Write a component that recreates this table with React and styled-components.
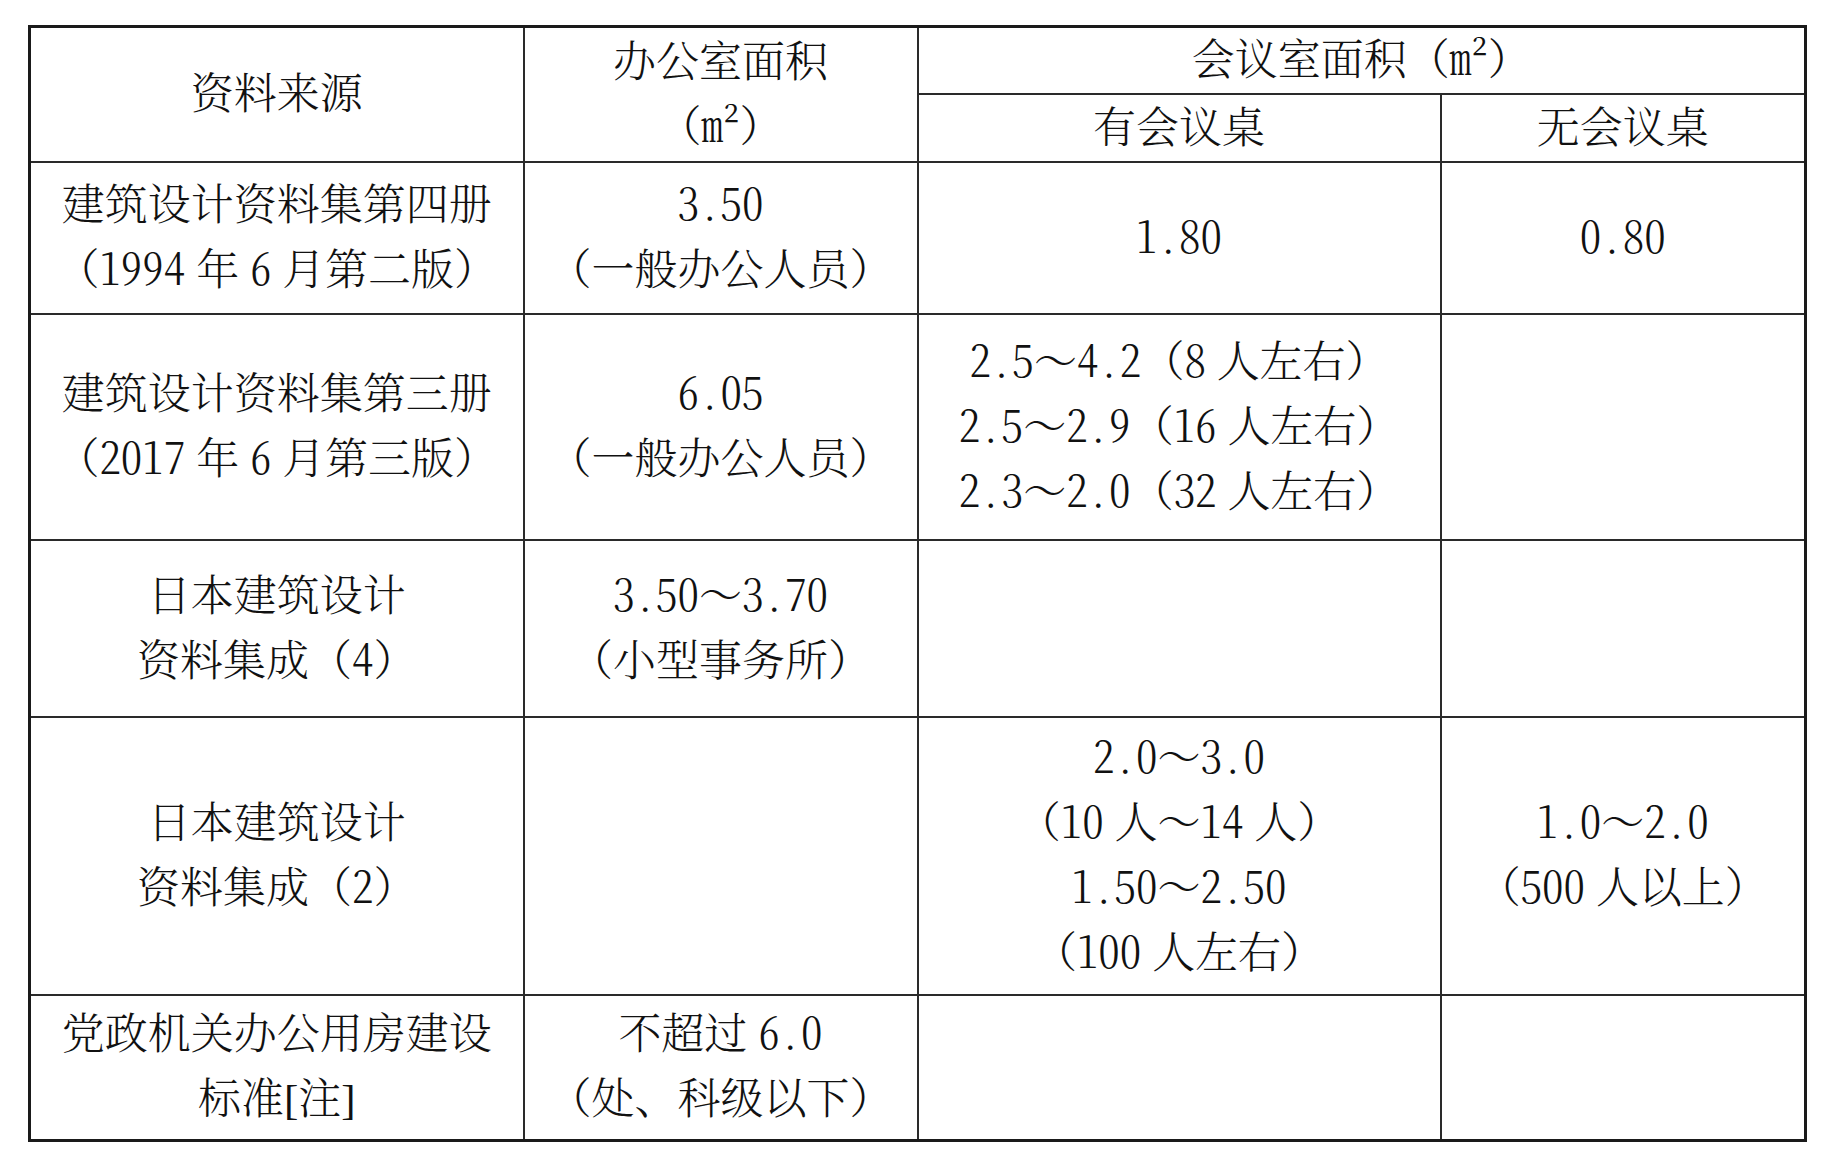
import React from "react";
import styled, { createGlobalStyle } from "styled-components";

const GlobalStyle = createGlobalStyle`
   html, body {
      margin: 0;
      padding: 0;
      background: #fff;
   }
`;

const rows = [
   {
      h: 152,
      src: ["建筑设计资料集第四册", "（1994 年 6 月第二版）"],
      office: ["3.50", "（一般办公人员）"],
      withDesk: ["1.80"],
      noDesk: ["0.80"],
   },
   {
      h: 226,
      src: ["建筑设计资料集第三册", "（2017 年 6 月第三版）"],
      office: ["6.05", "（一般办公人员）"],
      withDesk: [
         "2.5～4.2（8 人左右）",
         "2.5～2.9（16 人左右）",
         "2.3～2.0（32 人左右）",
      ],
      noDesk: [],
   },
   {
      h: 177,
      src: ["日本建筑设计", "资料集成（4）"],
      office: ["3.50～3.70", "（小型事务所）"],
      withDesk: [],
      noDesk: [],
   },
   {
      h: 278,
      src: ["日本建筑设计", "资料集成（2）"],
      office: [],
      withDesk: ["2.0～3.0", "（10 人～14 人）", "1.50～2.50", "（100 人左右）"],
      noDesk: ["1.0～2.0", "（500 人以上）"],
   },
   {
      h: 145,
      src: ["党政机关办公用房建设", "标准[注]"],
      office: ["不超过 6.0", "（处、科级以下）"],
      withDesk: [],
      noDesk: [],
   },
];

// numbers and the unit get half-width CJK figures, like the printed table
const withNums = (text) =>
   text
      .split(/([0-9.]+|m²)/)
      .map((part, i) =>
         /^([0-9.]+|m²)$/.test(part) ? <Num key={i}>{part}</Num> : part
      );

const Lines = ({ items }) =>
   items.map((text, i) => <Line key={i}>{withNums(text)}</Line>);

const App = () => {
   return (
      <Page>
         <GlobalStyle />
         <Table>
            <colgroup>
               <col style={{ width: 494 }} />
               <col style={{ width: 394 }} />
               <col style={{ width: 523 }} />
               <col style={{ width: 365 }} />
            </colgroup>
            <tbody>
               <Row $h={66}>
                  <Cell rowSpan={2}>资料来源</Cell>
                  <Cell rowSpan={2}>
                     <Lines items={["办公室面积", "（m²）"]} />
                  </Cell>
                  <Cell colSpan={2}>
                     <Lines items={["会议室面积（m²）"]} />
                  </Cell>
               </Row>
               <Row $h={68}>
                  <Cell>有会议桌</Cell>
                  <Cell>无会议桌</Cell>
               </Row>
               {rows.map((row, i) => (
                  <Row key={i} $h={row.h}>
                     <Cell>
                        <Lines items={row.src} />
                     </Cell>
                     <Cell>
                        <Lines items={row.office} />
                     </Cell>
                     <Cell>
                        <Lines items={row.withDesk} />
                     </Cell>
                     <Cell>
                        <Lines items={row.noDesk} />
                     </Cell>
                  </Row>
               ))}
            </tbody>
         </Table>
      </Page>
   );
};

const Page = styled.div`
   padding: 25px 0 0 28px;
`;

const Table = styled.table`
   border-collapse: collapse;
   table-layout: fixed;
   width: 1776px;
   border: 3px solid #1a1a1a;
   font-family: "Liberation Serif", "Noto Serif CJK SC", "Noto Sans CJK SC", serif;
   font-size: 43px;
   font-weight: 300;
   line-height: 65px;
   color: #111;
`;

const Row = styled.tr`
   height: ${(p) => p.$h}px;
`;

const Cell = styled.td`
   border: 2px solid #2a2a2a;
   padding: 0;
   text-align: center;
   vertical-align: middle;
   white-space: nowrap;
`;

const Line = styled.div`
   display: block;
   height: 65px;
`;

const Num = styled.span`
   font-family: "Noto Serif CJK SC", "Liberation Serif", serif;
   font-feature-settings: "hwid" 1;
   line-height: 1;
`;

export default App;
